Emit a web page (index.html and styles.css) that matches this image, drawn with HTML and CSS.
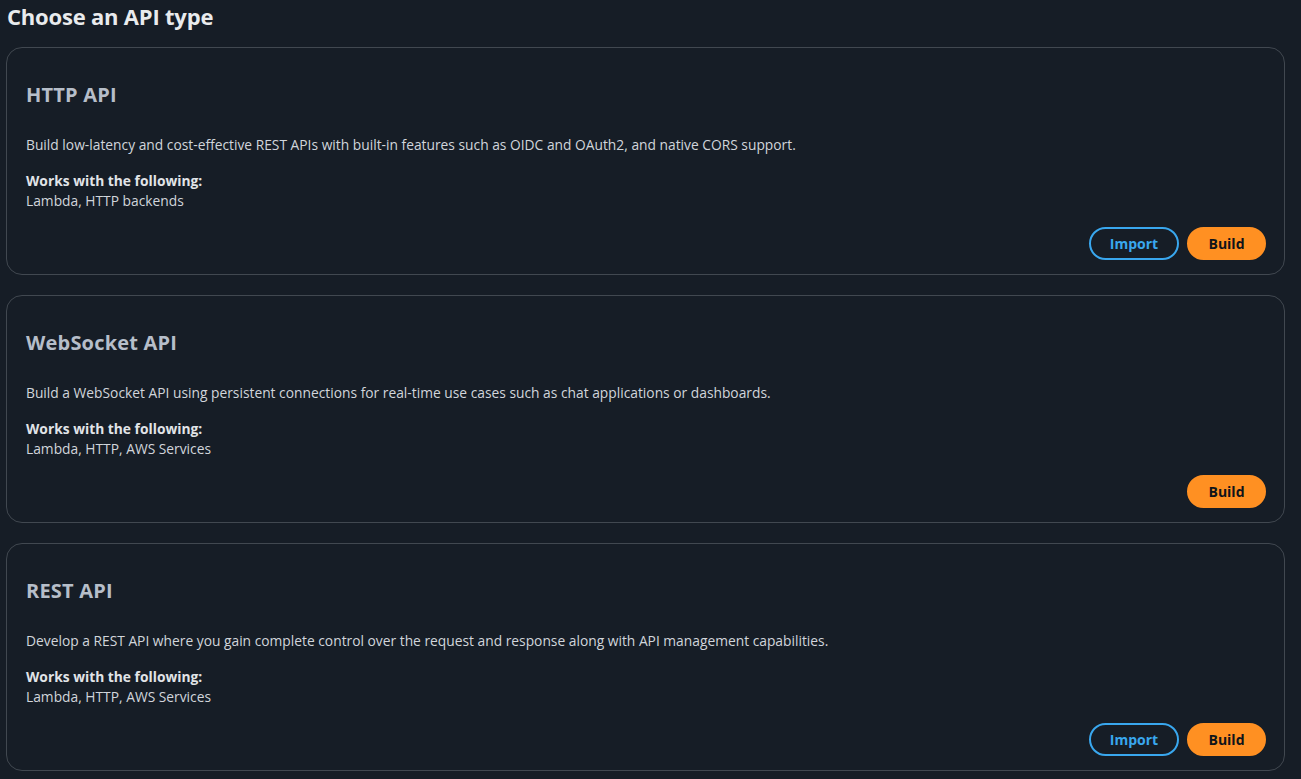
FILE: index.html
```html
<!DOCTYPE html>
<html>
<head>
<meta charset="utf-8">
<link rel="stylesheet" href="styles.css">
</head>
<body>
<main class="page">
  <h1 class="page-title">Choose an API type</h1>
  <section class="card">
    <h2 class="card-title">HTTP API</h2>
    <p class="card-desc">Build low-latency and cost-effective REST APIs with built-in features such as OIDC and OAuth2, and native CORS support.</p>
    <div class="works">
      <div class="works-label">Works with the following:</div>
      <div class="works-value">Lambda, HTTP backends</div>
    </div>
    <div class="actions">
      <button class="btn btn-normal">Import</button>
      <button class="btn btn-primary">Build</button>
    </div>
  </section>
  <section class="card">
    <h2 class="card-title">WebSocket API</h2>
    <p class="card-desc">Build a WebSocket API using persistent connections for real-time use cases such as chat applications or dashboards.</p>
    <div class="works">
      <div class="works-label">Works with the following:</div>
      <div class="works-value">Lambda, HTTP, AWS Services</div>
    </div>
    <div class="actions">
      <button class="btn btn-primary">Build</button>
    </div>
  </section>
  <section class="card">
    <h2 class="card-title">REST API</h2>
    <p class="card-desc">Develop a REST API where you gain complete control over the request and response along with API management capabilities.</p>
    <div class="works">
      <div class="works-label">Works with the following:</div>
      <div class="works-value">Lambda, HTTP, AWS Services</div>
    </div>
    <div class="actions">
      <button class="btn btn-normal">Import</button>
      <button class="btn btn-primary">Build</button>
    </div>
  </section>
</main>
</body>
</html>
```
FILE: styles.css
```css
* { box-sizing: border-box; }
html, body { margin: 0; padding: 0; background: #161d26; }
body {
  font-family: "Open Sans", "Noto Sans", sans-serif;
  color: #d1d5db;
  font-size: 13.8px;
}
.page {
  width: 1279px;
  margin-left: 6px;
  display: flex;
  flex-direction: column;
  gap: 20px;
  padding-bottom: 9px;
}
.page-title {
  margin: 0 0 -3px 1px;
  padding-top: 2px;
  font-size: 22px;
  line-height: 28px;
  font-weight: 700;
  color: #e9ebed;
  letter-spacing: -0.2px;
}
.card {
  border: 1px solid #414850;
  border-radius: 16px;
  padding: 35px 18px 14px 19px;
  display: flex;
  flex-direction: column;
  height: 228px;
}
.card-title {
  margin: 0;
  font-size: 20px;
  line-height: 24px;
  font-weight: 700;
  color: #b6bec9;
  letter-spacing: 0.2px;
}
.card-desc {
  margin: 28px 0 0 0;
  line-height: 20px;
}
.works { margin-top: 16px; line-height: 20px; }
.works-label { font-weight: 700; color: #e1e4e8; }
.actions {
  margin-top: auto;
  display: flex;
  justify-content: flex-end;
  gap: 8px;
}
.btn {
  font-family: inherit;
  font-size: 14px;
  font-weight: 700;
  height: 33px;
  border-radius: 17px;
  padding: 0 16px;
  cursor: pointer;
}
.btn-normal {
  background: transparent;
  border: 2px solid #39a7ee;
  color: #39a7ee;
  width: 90px;
}
.btn-primary {
  background: #ff9022;
  border: 2px solid #ff9022;
  color: #0f141a;
  width: 79px;
}
```
